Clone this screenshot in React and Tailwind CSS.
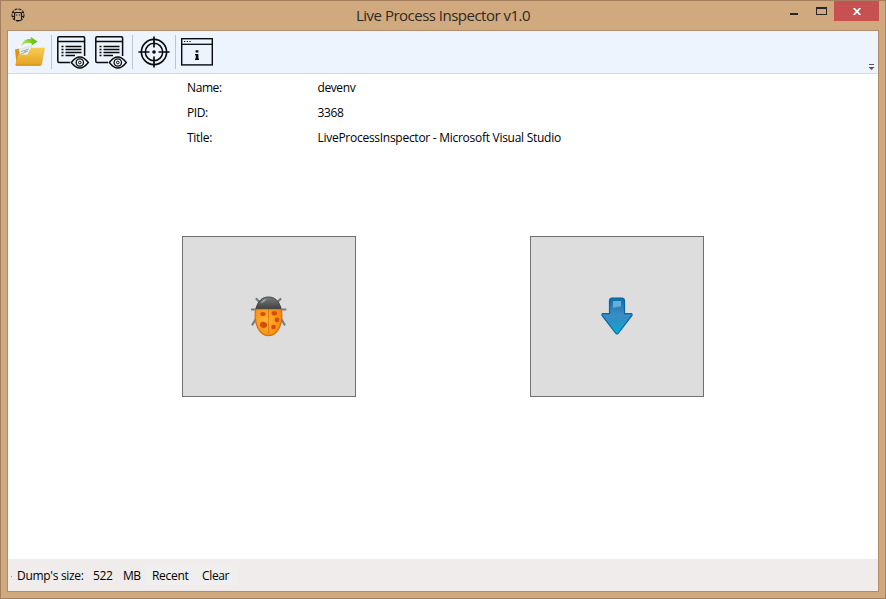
import React from "react";

const AppIcon = () => (
  <svg width="14" height="14" viewBox="0 0 14 14" fill="none" stroke="#1c1713">
    <circle cx="7" cy="7" r="6" strokeWidth="1.1" strokeDasharray="3 1" />
    <path d="M3.5 11V5.5L4.5 4.5H9.5L10.5 5.5V11" strokeWidth="1.1" />
    <path d="M1 4.5H3.5M10.5 4.5H13M1 8.5H3M11 8.5H13M4.8 7H6.2M7.8 7H9.2M5 12.5H9" strokeWidth="1" />
  </svg>
);

const OpenFolderIcon = () => (
  <svg width="32" height="32" viewBox="0 0 32 32">
    <defs>
      <linearGradient id="folder" x1="0" y1="0" x2="0" y2="1">
        <stop offset="0" stopColor="#f8cb52" />
        <stop offset="1" stopColor="#e3a321" />
      </linearGradient>
      <linearGradient id="arrow" x1="0" y1="0" x2="1" y2="0">
        <stop offset="0" stopColor="#b7ea62" />
        <stop offset=".5" stopColor="#7ed31c" />
        <stop offset="1" stopColor="#5eb80c" />
      </linearGradient>
    </defs>
    <path d="M1 13.5L5 12.5L6 16H18V28H2.5Z" fill="#dc9415" />
    <path d="M5 13.5L17 10L21 17L7 25Z" fill="#e9f0f5" stroke="#c3ccd3" strokeWidth=".5" />
    <path d="M7 15.5L15 13M6.8 18L14 15M10 16L13 15" stroke="#98a9b6" strokeWidth="1" />
    <path d="M1.2 29L4.5 18.5H13.5L17 11.8H30.2Q31.2 11.8 30.8 13L27.8 28.5Q27.5 29.6 26 29.6H1.8Z" fill="url(#folder)" />
    <path d="M2 29.2H26.5" stroke="#c98713" strokeWidth="1" />
    <path d="M7.5 9.8C8.5 4.5 12 2.4 17 3L16.6.8L23.5 5.6L17.8 9.6L17.5 7.2C13.5 6.2 10.5 7 7.5 9.8Z" fill="url(#arrow)" />
  </svg>
);

const ListEyeIcon = () => (
  <svg width="33" height="33" viewBox="0 0 33 33" fill="none" stroke="#080a0c">
    <path d="M13 26.5H2Q.8 26.5.8 25V2Q.8.8 2 .8H26.4Q27.6.8 27.6 2V20" strokeWidth="1.5" />
    <path d="M1 5.5H27.5M4.5 10.5H6.5M8.5 10.5H24.5M4.5 13.5H6.5M8.5 13.5H24.5M4.5 16.5H6.5M8.5 16.5H24.5M4.5 19.5H6.5M8.5 19.5H18" strokeWidth="1.3" />
    <path d="M14.3 26.5Q18.5 21 22.8 21T31.3 26.5Q27 32 22.8 32T14.3 26.5Z" fill="#edf4fd" strokeWidth="1.4" />
    <circle cx="22.8" cy="26.5" r="3.7" strokeWidth="1.3" />
    <circle cx="22.8" cy="26.5" r="1.3" strokeWidth="1" />
  </svg>
);

const TargetIcon = () => (
  <svg width="32" height="32" viewBox="0 0 32 32" fill="none" stroke="#080a0c">
    <circle cx="16" cy="16" r="12.6" strokeWidth="1.6" />
    <circle cx="16" cy="16" r="8.7" strokeWidth="1.5" />
    <path d="M16 .4V11.5M16 20.5V31.6M.4 16H11.5M20.5 16H31.6" strokeWidth="1.7" />
    <circle cx="16" cy="16" r="1.8" fill="#080a0c" stroke="none" />
  </svg>
);

const InfoWindowIcon = () => (
  <svg width="32" height="28" viewBox="0 0 32 28" fill="none" stroke="#080a0c">
    <rect x=".7" y=".7" width="30.6" height="26.2" strokeWidth="1.4" />
    <path d="M1 6.3H31" strokeWidth="1.3" />
    <path d="M3 3.5H4.2M5.7 3.5H6.9M8.4 3.5H9.6" strokeWidth="1.2" />
    <path d="M14.6 12.2H17.4V14.6H14.6ZM14 16H17.4V20.6H18V22H14V20.6H14.8V17.2H14Z" fill="#080a0c" stroke="none" />
  </svg>
);

const LadybugIcon = () => (
  <svg width="36" height="42" viewBox="0 0 36 42">
    <defs>
      <radialGradient id="shell" cx=".4" cy=".5" r=".6">
        <stop offset="0" stopColor="#ffb733" />
        <stop offset="1" stopColor="#f58a0c" />
      </radialGradient>
      <linearGradient id="head" x1="0" y1="0" x2="0" y2="1">
        <stop offset="0" stopColor="#777a7d" />
        <stop offset="1" stopColor="#404244" />
      </linearGradient>
    </defs>
    <path d="M9 6.5L5.5 3M26 6.5L29.5 3M6 13.5H.5M29 13.5H34.5M4.5 23.5L1.5 28.5M30.5 23.5L33.5 28.5" fill="none" stroke="#777b80" strokeWidth="2.2" strokeLinecap="round" />
    <path d="M5 12Q17.5 8 30 12C33 26 27.5 39.7 17.5 39.7S2 26 5 12Z" fill="url(#shell)" stroke="#e16a12" strokeWidth="1.2" />
    <path d="M17.5 13V38" stroke="#d96c0c" strokeWidth=".7" />
    <path d="M5 12.7C7 4 12 1 17.5 1S28 4 30 12.7Z" fill="url(#head)" stroke="#414447" strokeWidth="1" />
    <path d="M9.5 7.5Q11 3.6 15.5 2.8Q14 6.5 9.5 7.5Z" fill="#aaadaf" opacity=".8" />
    <g fill="#d64b08">
      <ellipse cx="12" cy="18" rx="2.7" ry="2.1" />
      <ellipse cx="23.3" cy="17.2" rx="2.7" ry="2.2" />
      <ellipse cx="26" cy="24" rx="2.3" ry="2.4" />
      <ellipse cx="12.5" cy="28.9" rx="3.6" ry="2.9" transform="rotate(15 12.5 28.9)" />
      <circle cx="22.5" cy="31" r="2.3" />
    </g>
  </svg>
);

const DownArrowIcon = () => (
  <svg className="-mt-px" width="32" height="38" viewBox="0 0 32 38">
    <defs>
      <linearGradient id="down" x1="0" y1="0" x2="0" y2="1">
        <stop offset="0" stopColor="#0b6fae" />
        <stop offset=".45" stopColor="#3b8cc2" />
        <stop offset=".65" stopColor="#2c91c5" />
        <stop offset="1" stopColor="#00afd3" />
      </linearGradient>
    </defs>
    <path d="M10.5 1H21.5Q23.5 1.3 23.5 3.5V16.7H30Q31.8 17 30.8 18.7L17.5 36Q16 38 14.5 36L1.2 18.7Q.2 17 2 16.7H8.5V3.5Q8.5 1.3 10.5 1Z" fill="url(#down)" stroke="#07649d" strokeWidth="1.2" />
    <path d="M12 4H20V9.5Q15 9.5 12 11Z" fill="#68add7" />
  </svg>
);

const Separator = () => <div className="h-[34px] w-px bg-[#bfc3ca]" />;

const details = [
  ["Name:", "devenv", "tracking-[-0.4px]", "tracking-[-0.4px]"],
  ["PID:", "3368", "tracking-[-0.4px]", "tracking-[-0.35px]"],
  ["Title:", "LiveProcessInspector - Microsoft Visual Studio", "tracking-[-0.3px]", "tracking-[-0.275px]"],
];

export default function App() {
  return (
    <div className="flex h-[599px] w-[886px] flex-col overflow-hidden border border-[#a37f60] bg-[#d1a97e] px-1.5 pb-1.5 font-['Open_Sans',sans-serif] text-xs text-black">
      <header className="grid h-[29px] shrink-0 grid-cols-[1fr_auto_1fr] items-start">
        <div className="pt-[7px] pl-1"><AppIcon /></div>
        <h1 className="pt-1 text-[15px] leading-[21px] tracking-[-0.51px] text-[#2c2926]">Live Process Inspector v1.0</h1>
        <div className="flex justify-end">
          <div className="mt-3 mr-[18px] h-2 w-2 -translate-y-[6px] border-b-2 border-[#292725]" />
          <div className="mt-1.5 mr-[7px] h-2 w-[11px] border border-t-2 border-[#292725]" />
          <div className="flex h-5 w-[45px] items-center justify-center bg-[#c75050] pl-px">
            <svg width="8" height="7" viewBox="0 0 8 7" stroke="#fff" strokeWidth="1.8"><path d="M.7 0L7.3 7M7.3 0L.7 7" /></svg>
          </div>
        </div>
      </header>
      <main className="flex min-h-0 grow flex-col border border-[#b08c6a] bg-white">
        <div className="flex h-[43px] shrink-0 border-b border-[#dadbdd] bg-[#f3f5f8] pl-[3px]">
          <div className="flex grow items-start rounded-md bg-[#edf4fd] pt-1 pl-[3px]">
            <div className="pt-px"><OpenFolderIcon /></div>
            <div className="ml-[5px]"><Separator /></div>
            <div className="mt-px ml-[5px]"><ListEyeIcon /></div>
            <div className="mt-px ml-[5px]"><ListEyeIcon /></div>
            <div className="ml-1"><Separator /></div>
            <div className="mt-px ml-[5px]"><TargetIcon /></div>
            <div className="ml-[5px]"><Separator /></div>
            <div className="mt-[3px] ml-[5px]"><InfoWindowIcon /></div>
            <svg className="mt-7 mr-[3px] ml-auto" width="7" height="8" viewBox="0 0 7 8"><path d="M1 1.5H6" stroke="#555" /><path d="M.5 4H6.5L3.5 7Z" fill="#555" /></svg>
          </div>
        </div>
        <dl className="flex flex-col pt-px pl-[179px]">
          {details.map(([label, value, labelTracking, valueTracking]) => (
            <div key={label} className="flex h-[25px] items-center leading-4">
              <dt className={`w-[130.5px] ${labelTracking}`}>{label}</dt>
              <dd className={valueTracking}>{value}</dd>
            </div>
          ))}
        </dl>
        <div className="flex grow items-start gap-[174px] pt-[86px] pl-[174px]">
          <button className="flex h-[161px] w-[174px] items-center justify-center border border-[#707070] bg-[#dddddd]"><LadybugIcon /></button>
          <button className="flex h-[161px] w-[174px] items-center justify-center border border-[#707070] bg-[#dddddd]"><DownArrowIcon /></button>
        </div>
        <footer className="flex h-8 shrink-0 items-center bg-[#f0eceb] pt-0.5 leading-4">
          <span className="mr-[5px] ml-[3px] size-px bg-[#999]" />
          <span className="w-[76px] tracking-[-0.3px]">Dump's size:</span>
          <span className="w-[30px] tracking-[-0.35px]">522</span>
          <span className="w-[22px] tracking-[-0.5px]">MB</span>
          <div className="flex h-[18px] items-center bg-[#eeefee] pr-[7px] pl-[7px]">
            <span className="w-[50px] tracking-[-0.3px]">Recent</span>
            <span className="w-[28px] tracking-[-0.35px]">Clear</span>
          </div>
        </footer>
      </main>
    </div>
  );
}
